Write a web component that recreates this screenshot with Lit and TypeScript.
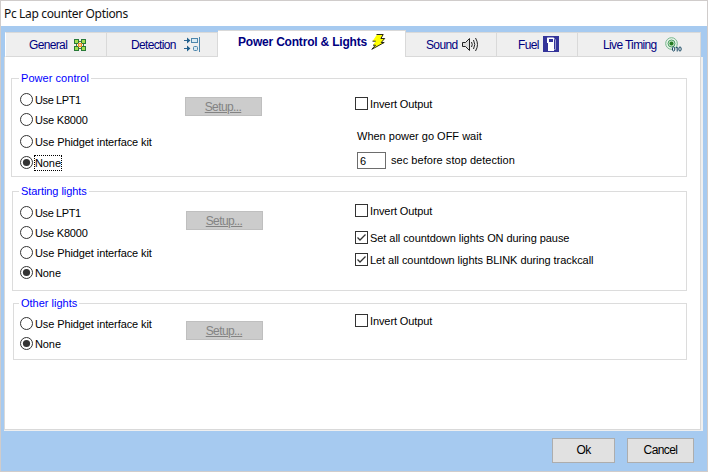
import { LitElement, html, css, svg } from "lit";
import { customElement, property } from "lit/decorators.js";

const icons: Record<string, unknown> = {
  general: svg`<svg width="14" height="14" viewBox="0 0 14 14">
    <path d="M4 4L10 10M10 4L4 10" stroke="#5a7030" stroke-width="1.4"/><path d="M3.5 5V9M10.5 5V9M5 3.5H9M5 10.5H9" stroke="#5a7030" stroke-width="1"/>
    <g fill="#a4e04f" stroke="#287a38" stroke-width="1"><rect x="1.5" y="1.5" width="4" height="4"/><rect x="8.5" y="1.5" width="4" height="4"/><rect x="1.5" y="8.5" width="4" height="4"/><rect x="8.5" y="8.5" width="4" height="4"/></g>
    <rect x="5" y="5" width="4" height="4" fill="#e8892c"/><rect x="6" y="6" width="2" height="2" fill="#ffe27a"/></svg>`,
  detection: svg`<svg width="16" height="15" viewBox="0 0 16 15" fill="none">
    <path d="M0 3.5H5M0 11.5H5" stroke="#2d6590"/><path d="M3 .5L6.4 3.5L3 6.5ZM3 8.5L6.4 11.5L3 14.5Z" fill="#1f5f8c"/>
    <rect x="7.5" y="1.5" width="6" height="4" fill="#d8eaf4" stroke="#4c86ac"/><rect x="9.5" y="9.5" width="4" height="4" rx="1" fill="#d8eaf4" stroke="#4c86ac"/><path d="M15.5 0V15" stroke="#4c86ac"/></svg>`,
  power: svg`<svg width="15" height="16" viewBox="0 0 15 16">
    <path d="M6 .5H12.5L10 4.5H14L10.3 8.5H13.5L1 15.3L4.5 11.2H2L4.5 7.2H1.5Z" fill="#ff0"/><path d="M5.5 .5H12.2L9.9 4.5H13.7L10.2 8.5H13.2L.8 15.3L4.5 11.2H2M4.7 7.2H1.5" fill="none" stroke="#111" stroke-width=".9"/></svg>`,
  sound: svg`<svg width="17" height="15" viewBox="0 0 17 15" fill="none" stroke="#222">
    <path d="M.5 5.5H3.5L7.5 1.5V13.5L3.5 9.5H.5Z" fill="#ddd"/><path d="M9.5 5Q11 7.5 9.5 10M11.5 3Q14 7.5 11.5 12M13.5 1Q17.5 7.5 13.5 14"/></svg>`,
  fuel: svg`<svg width="16" height="16" viewBox="0 0 16 16"><rect width="16" height="16" fill="#34349a"/>
    <path d="M4.5 4V1.5H10.5L12.5 4V13.5H11" fill="none" stroke="#9c9cd0"/><path d="M4 2H11V15H5V7H4Z" fill="#fff"/><rect x="6" y="3" width="4" height="3" fill="#34349a"/></svg>`,
  live: svg`<svg width="17" height="15" viewBox="0 0 17 15"><circle cx="6.5" cy="6.5" r="5.8" fill="#eaf5ec" stroke="#74b58b"/><circle cx="6.5" cy="6.5" r="3.5" fill="#c9e8c9" stroke="#4c9d65"/><circle cx="6.5" cy="6.5" r="2" fill="#237a20"/>
    <g fill="none" stroke="#174863"><ellipse cx="8.6" cy="12" rx="1.2" ry="2.1" fill="#efefef"/><path d="M11 11L12.2 10V14.5"/><ellipse cx="15" cy="12" rx="1.2" ry="2.1"/></g></svg>`,
};

@customElement("option-mark")
export class OptionMark extends LitElement {
  @property() kind = "radio";
  @property() label = "";
  @property({ type: Boolean }) checked = false;
  @property({ type: Boolean }) focused = false;
  static styles = css`
    :host { display: flex; align-items: flex-start; height: 14px; gap: 1px; font: 11px/14px "Liberation Sans", Arial, sans-serif; letter-spacing: -.1px; color: #000; white-space: nowrap; }
    svg { flex: none; }
    .label { padding: 1px; margin-top: -1px; }
    .focused { outline: 1px dotted #000; outline-offset: -1px; }
  `;
  render() {
    const mark = this.kind === "radio"
      ? svg`<circle cx="6.5" cy="6.5" r="6" fill="#fff" stroke="#333"/>${this.checked ? svg`<circle cx="6.5" cy="6.5" r="3.6" fill="#333"/>` : ""}`
      : svg`<rect x=".5" y=".5" width="12" height="12" fill="#fff" stroke="#333"/>${this.checked ? svg`<path d="M2.5 6.5L5 9L10.5 3.5" fill="none" stroke="#333" stroke-width="1.3"/>` : ""}`;
    return html`<svg width="13" height="13">${mark}</svg><span class="label ${this.focused ? "focused" : ""}">${this.label}</span>`;
  }
}

@customElement("app-root")
export class AppRoot extends LitElement {
  static styles = css`
    :host { display: block; }
    * { box-sizing: border-box; }
    .window { width: 708px; height: 472px; border: 1px solid #d0cccb; background: #a6caf0; display: flex; flex-direction: column; font: 11px/14px "Liberation Sans", Arial, sans-serif; color: #000; overflow: hidden; white-space: nowrap; }
    .title { height: 25px; flex: none; background: #fff; padding: 0 0 0 3px; font: 12px/25px "Noto Sans", sans-serif; color: #111; letter-spacing: -.34px; }
    .tabs { display: flex; align-items: flex-end; height: 31px; flex: none; margin-left: 4px; width: 696px; }
    .tab { height: 25px; display: flex; align-items: center; background: #efefef; border: 1px solid #d9d9d9; border-width: 1px 1px 1px 0; color: #000080; font-size: 12px; letter-spacing: -.65px; gap: 7px; }
    .tab svg { flex: none; display: block; }
    .general { width: 102px; border-left: 1px solid #fff; padding-left: 23px; gap: 6px; }
    .detection { width: 111px; padding-left: 24px; gap: 8px; }
    .power { width: 188px; height: 27px; background: #fff; border-bottom: 0; font-weight: bold; letter-spacing: -.2px; gap: 4px; padding: 0 0 4px 20px; }
    .sound { width: 91px; gap: 5px; padding-left: 20px; }
    .fuel { width: 81px; gap: 4px; padding-left: 21px; }
    .fuel svg { margin-top: -1px; }
    .live { width: 123px; gap: 8px; padding-left: 25px; }
    .panel { width: 699px; height: 374px; flex: none; margin-left: 3px; border: solid #efefef; border-width: 0 2px 1px 0; }
    .page { height: 373px; background: #fff; border: solid #d9d9d9; border-width: 0 1px 1px 1px; padding: 21px 13px 0 6px; display: flex; flex-direction: column; }
    .group { border: 1px solid #dcdcdc; display: grid; grid-template-columns: 165px 170px 1fr; align-items: start; align-content: start; flex: none; padding-left: 8px; }
    .legend { grid-column: 1 / -1; justify-self: start; background: #fff; color: #00f; height: 14px; margin-top: -8px; padding: 0 2px; margin-left: -1px; }
    .g1 { height: 99px; }
    .g1 .legend { letter-spacing: .05px; }
    .g2 { height: 100px; margin: 14px 0 0 1px; padding-left: 7px; }
    .g2 .legend { letter-spacing: -.06px; }
    .g3 { height: 57px; margin: 12px 0 0 2px; padding-left: 6px; }
    .col { display: flex; flex-direction: column; gap: 6px; }
    .lpt { letter-spacing: -.4px; }
    .k8000 { letter-spacing: -.2px; }
    .wide { letter-spacing: -.06px; }
    .setup { width: 77px; height: 19px; background: #ccc; border: 1px solid #bfbfbf; color: #838383; text-decoration: underline; text-align: center; font: 12px/18px "Liberation Sans", Arial, sans-serif; letter-spacing: -.6px; padding: 0 1px 0 0; }
    .g1 .setup { margin: 12px 0 0; }
    .g2 .setup { margin: 13px 0 0 1px; }
    .g3 .setup { margin: 11px 0 0 1px; }
    .g1 .first { margin-top: 8px; }
    .g2 .first { margin-top: 8px; }
    .g3 .first { margin-top: 7px; }
    .g1 .phidget { margin-top: 2px; }
    .g1 .none { margin-top: 1px; }
    .right { display: flex; flex-direction: column; }
    .g1 .right { margin-top: 12px; }
    .g2 .right { margin-top: 6px; }
    .g3 .right { margin-top: 4px; }
    .when { margin: 18px 0 0 2px; }
    .delay { display: flex; align-items: flex-start; gap: 5px; margin: 9px 0 0 2px; letter-spacing: .04px; }
    .unit { padding-top: 1px; }
    .field { width: 29px; height: 17px; border: 1px solid #6d6d6d; padding: 1px 2px; line-height: 14px; }
    .pause { margin-top: 13px; }
    .blink { margin-top: 8px; }
    .actions { display: flex; justify-content: flex-end; gap: 12px; padding: 7px 13px 0 0; }
    .button { height: 25px; background: #e1e1e1; border: 1px solid #adadad; font: 12px/23px "Liberation Sans", Arial, sans-serif; letter-spacing: -.6px; text-align: center; padding: 0; color: #000; }
    .ok { width: 63px; }
    .cancel { width: 67px; }
  `;
  tab(id: string, label: string) {
    return html`<div class="tab ${id}"><span>${label}</span>${icons[id]}</div>`;
  }
  render() {
    return html`<div class="window">
      <div class="title">Pc Lap counter Options</div>
      <div class="tabs">
        ${this.tab("general", "General")}${this.tab("detection", "Detection")}${this.tab("power", "Power Control & Lights")}${this.tab("sound", "Sound")}${this.tab("fuel", "Fuel")}${this.tab("live", "Live Timing")}
      </div>
      <div class="panel"><div class="page">
        <div class="group g1"><span class="legend">Power control</span>
          <div class="col">
            <option-mark class="first lpt" label="Use LPT1"></option-mark><option-mark class="k8000" label="Use K8000"></option-mark>
            <option-mark class="phidget" label="Use Phidget interface kit"></option-mark><option-mark class="none" label="None" checked focused></option-mark>
          </div>
          <button class="setup">Setup...</button>
          <div class="right"><option-mark kind="check" label="Invert Output"></option-mark>
            <span class="when">When power go OFF wait</span>
            <div class="delay"><span class="field">6</span><span class="unit">sec before stop detection</span></div></div>
        </div>
        <div class="group g2"><span class="legend">Starting lights</span>
          <div class="col">
            <option-mark class="first lpt" label="Use LPT1"></option-mark><option-mark class="k8000" label="Use K8000"></option-mark>
            <option-mark label="Use Phidget interface kit"></option-mark><option-mark label="None" checked></option-mark>
          </div>
          <button class="setup">Setup...</button>
          <div class="right"><option-mark kind="check" label="Invert Output"></option-mark>
            <option-mark class="pause wide" kind="check" label="Set all countdown lights ON during pause" checked></option-mark>
            <option-mark class="blink wide" kind="check" label="Let all countdown lights BLINK during trackcall" checked></option-mark></div>
        </div>
        <div class="group g3"><span class="legend">Other lights</span>
          <div class="col"><option-mark class="first" label="Use Phidget interface kit"></option-mark><option-mark label="None" checked></option-mark></div>
          <button class="setup">Setup...</button>
          <div class="right"><option-mark kind="check" label="Invert Output"></option-mark></div>
        </div>
      </div></div>
      <div class="actions"><button class="button ok">Ok</button><button class="button cancel">Cancel</button></div>
    </div>`;
  }
}
